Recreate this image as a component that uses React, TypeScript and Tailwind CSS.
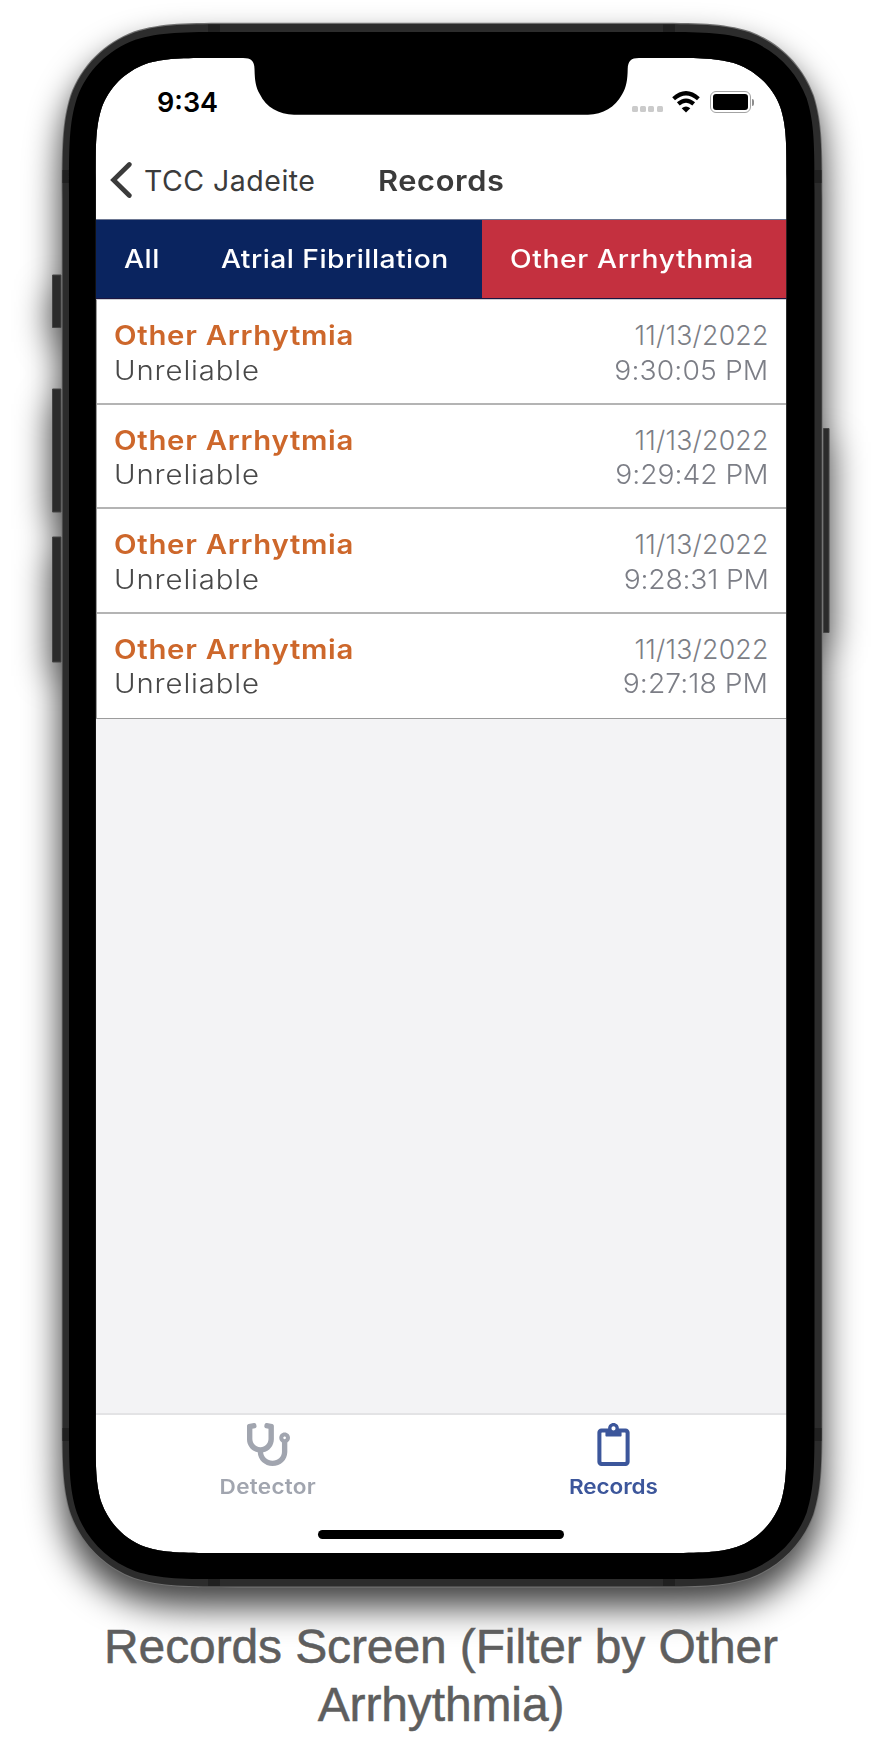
import React from "react";
import { FaRegClipboard, FaStethoscope } from "react-icons/fa";

type RecordEntry = { date: string; time: string; spacing: string };

const records: RecordEntry[] = [
  { date: "11/13/2022", time: "9:30:05 PM", spacing: "tracking-[0.1px]" },
  { date: "11/13/2022", time: "9:29:42 PM", spacing: "tracking-[-0.05px]" },
  { date: "11/13/2022", time: "9:28:31 PM", spacing: "tracking-[-0.2px]" },
  { date: "11/13/2022", time: "9:27:18 PM", spacing: "tracking-[0.05px]" },
];

// Rounded rectangle with continuous-curvature corners.
function squircle(x: number, y: number, w: number, h: number, r: number) {
  const R = x + w;
  const B = y + h;
  const k = [1.52866, 1.08849, 0.86841, 0.63149, 0.37282, 0.16906, 0.07491].map((n) => n * r);
  const [a, b, c, d, e, f, g] = k;
  return [
    `M${x + a} ${y}H${R - a}`,
    `C${R - b} ${y} ${R - c} ${y} ${R - d} ${y + g}`,
    `C${R - e} ${y + f} ${R - f} ${y + e} ${R - g} ${y + d}`,
    `C${R} ${y + c} ${R} ${y + b} ${R} ${y + a}V${B - a}`,
    `C${R} ${B - b} ${R} ${B - c} ${R - g} ${B - d}`,
    `C${R - f} ${B - e} ${R - e} ${B - f} ${R - d} ${B - g}`,
    `C${R - c} ${B} ${R - b} ${B} ${R - a} ${B}H${x + a}`,
    `C${x + b} ${B} ${x + c} ${B} ${x + d} ${B - g}`,
    `C${x + e} ${B - f} ${x + f} ${B - e} ${x + g} ${B - d}`,
    `C${x} ${B - c} ${x} ${B - b} ${x} ${B - a}V${y + a}`,
    `C${x} ${y + b} ${x} ${y + c} ${x + g} ${y + d}`,
    `C${x + f} ${y + e} ${x + e} ${y + f} ${x + d} ${y + g}`,
    `C${x + c} ${y} ${x + b} ${y} ${x + a} ${y}Z`,
  ].join("");
}

const body = squircle(61.7, 22.7, 760.8, 1565, 115);
const rim = squircle(62.5, 24, 759.2, 1562.5, 114);
const glass = squircle(69, 32, 745.5, 1547, 105);
const screen = squircle(95.7, 58, 690.8, 1495, 79);

function DeviceShadow() {
  return (
    <svg className="absolute inset-0 h-[1740px] w-[882px]" viewBox="0 0 882 1740" aria-hidden="true">
      <defs>
        <filter id="soft" x="-10%" y="-10%" width="120%" height="120%">
          <feGaussianBlur stdDeviation="17" />
        </filter>
      </defs>
      <g filter="url(#soft)" fillOpacity="0.75">
        <path d={squircle(60, 42, 764, 1565, 115)} />
        <path d="M51 290h12v52H51zM51 404h12v122H51zM51 553h12v123H51zM822 442h9v205h-9z" />
      </g>
    </svg>
  );
}

function DeviceFrame() {
  return (
    <svg className="pointer-events-none absolute inset-0 h-[1740px] w-[882px]" viewBox="0 0 882 1740" aria-hidden="true">
      <g fill="#2b2b2b" stroke="#454545" strokeWidth="1">
        <path d="M52.5 275h8.5v52.500h-8.500zM52.500 389h8.500v123h-8.500zM52.500 537h8.500v125h-8.500z" />
        <path d="M823.500 428.500h5.500v204h-5.500z" />
      </g>
      <path fillRule="evenodd" fill="#707070" d={body + screen} />
      <path fillRule="evenodd" fill="#2c2c2c" d={rim + screen} />
      <path fill="#202020" d="M208 24.500h12v8h-12zM663 24.500h12v8h-12zM208 1578h12v8h-12zM663 1578h12v8h-12zM62.500 170h7v13h-7zM814.500 170h7v13h-7zM62.500 1428h7v13h-7zM814.500 1428h7v13h-7z" />
      <path fillRule="evenodd" fill="#000" d={glass + screen} />
      <path
        fill="#000"
        d="M243 56V58C251 58 254.500 61 254.500 69C254.800 80 255.500 87 260 94.500C266 107 279 114.700 294 114.700H588C603 114.700 615 107 622 94.500C626.500 87 627.500 80 627.700 69C628 61 631 58 639 58V56Z"
      />
    </svg>
  );
}

function StatusIcons() {
  return (
    <div className="flex items-start">
      <div className="mt-[15px] flex gap-[2.3px]">
        <span className="size-[6px] rounded-[1.500px] bg-[#cbcbcb]" />
        <span className="size-[6px] rounded-[1.500px] bg-[#cbcbcb]" />
        <span className="size-[6px] rounded-[1.500px] bg-[#cbcbcb]" />
        <span className="size-[6px] rounded-[1.500px] bg-[#cbcbcb]" />
      </div>
      <svg className="ml-[8.500px] h-[22px] w-[30px]" viewBox="0 0 30 22" fill="none" aria-label="Wi-Fi">
        <path d="M2.600 7.700Q15 -3.300 27.400 7.700" stroke="#000" strokeWidth="4.200" />
        <path d="M7.300 12.900Q15 6.300 22.700 12.900" stroke="#000" strokeWidth="4.200" />
        <path d="M10.700 17.200Q15 13.600 19.300 17.200L15 21.500Z" fill="#000" />
      </svg>
      <div className="ml-[8.500px] h-[22px] w-[41px] rounded-[6px] border-[1.500px] border-[#a3a3a3] p-[2px]">
        <div className="h-full rounded-[3px] bg-black" />
      </div>
      <span className="mt-[8px] ml-[1.500px] h-[7px] w-[2px] rounded-r-full bg-[#8d8d8d]" />
    </div>
  );
}

function RecordRow({ date, time, spacing }: RecordEntry) {
  return (
    <li className="flex h-[104.500px] justify-between border-b-2 border-[#b4b4b4] bg-white pt-[18px] pr-[17px] pl-[17px] text-[26.700px] leading-[34.700px] last:h-[105.500px] last:border-b last:border-[#9c9c9c]">
      <div>
        <div className="origin-left scale-x-110 font-semibold tracking-[0.650px] text-[#cd672b]">Other Arrhytmia</div>
        <div className="origin-left scale-x-110 font-[350] tracking-[0.780px] text-[#484848]">Unreliable</div>
      </div>
      <div className="flex flex-col items-end font-[350] text-[#7c7e86]">
        <div className="tracking-[0.200px]">{date}</div>
        <div className={`origin-right scale-x-106 ${spacing}`}>{time}</div>
      </div>
    </li>
  );
}

export default function App() {
  return (
    <main className="relative h-[1740px] w-[882px] overflow-hidden bg-white font-[Inter,sans-serif]">
      <DeviceShadow />
      <div className="relative flex h-full flex-col items-center pt-[58px]">
        <section className="flex h-[1495px] w-[691px] shrink-0 flex-col bg-[#f3f3f5]">
          <div className="flex h-[92px] shrink-0 justify-between bg-white pt-[33px] pr-[32.500px] pl-[61.500px]">
            <div className="-mt-[4.500px] text-[27px] leading-8 font-semibold text-black">9:34</div>
            <StatusIcons />
          </div>
          <header className="flex h-[69px] shrink-0 items-start bg-white text-[#3b3b3b]">
            <svg className="mt-[11px] ml-[14px] h-[38px] w-[22px]" viewBox="0 0 22 38" fill="none" aria-hidden="true">
              <path d="M19.300 3.500L3.500 19L19.300 34.500" stroke="currentColor" strokeWidth="4.700" strokeLinecap="round" />
            </svg>
            <div className="mt-[12px] ml-[12.500px] w-[234px] text-[28.500px] leading-[38px] font-[370] tracking-[0.480px] whitespace-nowrap">TCC Jadeite</div>
            <h1 className="mt-[13px] origin-left scale-x-110 text-[28px] leading-[37px] font-semibold tracking-[0.550px]">Records</h1>
          </header>
          <nav className="flex h-[80px] shrink-0 border-y border-t-[#6d7792] border-b-[#1b1540] bg-[#0a245f] text-[25.700px] leading-[78px] font-medium whitespace-nowrap text-white">
            <div className="w-[96px] pl-[28.500px]">
              <span className="inline-block origin-left scale-x-110 tracking-[0.500px]">All</span>
            </div>
            <div className="w-[290.500px] pl-[29px]">
              <span className="inline-block origin-left scale-x-110 tracking-[0.420px]">Atrial Fibrillation</span>
            </div>
            <div className="flex-1 bg-[#c4303f] pl-[28px]">
              <span className="inline-block origin-left scale-x-110 tracking-[0.550px]">Other Arrhythmia</span>
            </div>
          </nav>
          <ul className="border-x border-t border-[#9c9c9c] border-t-[#cfcfd4]">
            {records.map((record) => (
              <RecordRow key={record.time} {...record} />
            ))}
          </ul>
          <footer className="mt-auto flex h-[140px] shrink-0 flex-col items-center border-t-2 border-[#e3e3e5] bg-white">
            <div className="grid w-full grid-cols-2 text-[20.500px] leading-6 font-semibold">
              <div className="flex flex-col items-center pt-[8px] text-[#a1a5af]">
                <FaStethoscope className="size-[43px]" />
                <span className="mt-[9px] scale-x-110 tracking-[0.250px]">Detector</span>
              </div>
              <div className="flex flex-col items-center pt-[8px] text-[#3c569b]">
                <FaRegClipboard className="size-[43px]" />
                <span className="mt-[9px] scale-x-110 tracking-[-0.100px]">Records</span>
              </div>
            </div>
            <div className="mt-[31px] h-[9px] w-[246.500px] rounded-full bg-black" />
          </footer>
        </section>
        <p className="relative mt-[65px] text-center font-['Liberation_Sans',sans-serif] text-[48px] leading-[58px] tracking-[-0.120px] text-[#5e5e5e] [-webkit-text-stroke:0.500px_#5e5e5e]">
          Records Screen (Filter by Other
          <br />
          Arrhythmia)
        </p>
      </div>
      <DeviceFrame />
    </main>
  );
}
